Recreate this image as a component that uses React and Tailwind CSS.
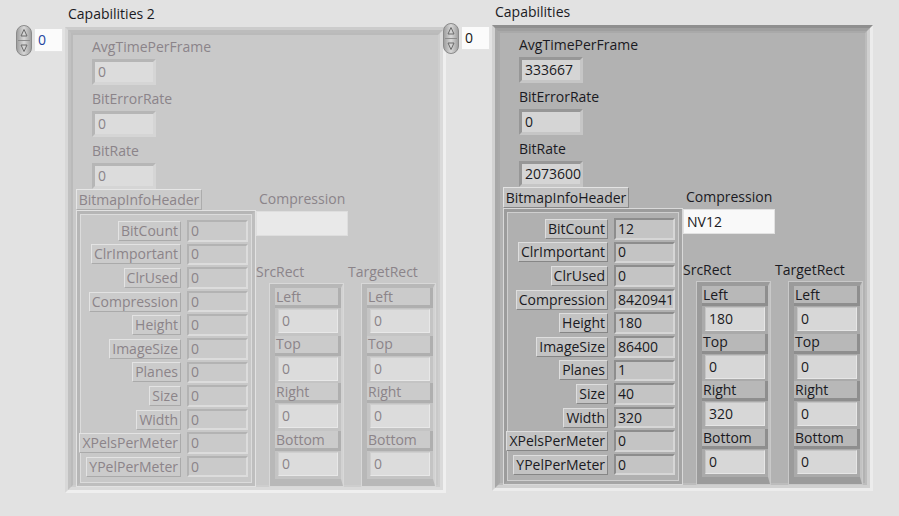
import React from "react";

const THEMES = {
  dark: {
    text: "text-[#1a1a22]",
    l1: "border-[3px] border-t-[#8f8f8f] border-l-[#d2d2d2] border-r-[#ececec] border-b-[#ececec]",
    l2: "border-[3px] border-t-[#9f9f9f] border-l-[#a7a7a7] border-r-[#d0d0d0] border-b-[#d0d0d0]",
    l3: "border-[2px] border-t-[#a9a9a9] border-l-[#a9a9a9] border-r-[#bcbcbc] border-b-[#bcbcbc] bg-[#b2b2b2]",
    topBox: "border-[3px] border-t-[#979797] border-l-[#979797] border-r-[#c6c6c6] border-b-[#c6c6c6] bg-[#d5d5d5]",
    headLabel: "border border-t-[#e3e3e3] border-l-[#e3e3e3] border-r-[#888888] border-b-[#888888] bg-[#c1c1c1]",
    cfOuter: "border border-[#d9d9d9]",
    cfMid: "border-[3px] border-t-[#9c9c9c] border-l-[#9c9c9c] border-r-[#a5a5a5] border-b-[#a5a5a5]",
    cfInner: "border border-[#cfcfcf] bg-[#b0b0b0]",
    rowLabel: "border border-t-[#dedede] border-l-[#dedede] border-r-[#868686] border-b-[#868686] bg-[#c3c3c3]",
    rowNum: "border-[2px] border-t-[#8d8d8d] border-l-[#8d8d8d] border-r-[#d6d6d6] border-b-[#d6d6d6] bg-[#c4c4c4]",
    strBox: "border border-[#e2e2e2] bg-[#f9f9f9]",
    rfOuter: "border border-[#c9c9c9]",
    rfInner: "border-t-[4px] border-l-[5px] border-r-[2px] border-b-[7px] border-t-[#9b9b9b] border-l-[#9b9b9b] border-r-[#c2c2c2] border-b-[#9b9b9b] bg-[#aaaaaa]",
    rBar: "border-b-[3px] border-r-[3px] border-b-[#8e8e8e] border-r-[#8e8e8e] bg-[#b8b8b8]",
    rBox: "border border-t-[#c4c4c4] border-l-[#c4c4c4] border-r-[#e6e6e6] border-b-[#e6e6e6] bg-[#d7d7d7]",
    idxText: "text-[#151515]",
  },
  dim: {
    text: "text-[#8b8489]",
    l1: "border-[3px] border-t-[#cccccc] border-l-[#d8d8d8] border-r-[#efefef] border-b-[#efefef]",
    l2: "border-[3px] border-t-[#bcbcbc] border-l-[#c1c1c1] border-r-[#dadada] border-b-[#dadada]",
    l3: "border-[2px] border-t-[#bababa] border-l-[#bababa] border-r-[#cecece] border-b-[#cecece] bg-[#c9c9c9]",
    topBox: "border-[3px] border-t-[#b6b6b6] border-l-[#b6b6b6] border-r-[#d5d5d5] border-b-[#d5d5d5] bg-[#dcdcdc]",
    headLabel: "border border-t-[#e6e6e6] border-l-[#e6e6e6] border-r-[#acacac] border-b-[#acacac] bg-[#cbcbcb]",
    cfOuter: "border border-[#e2e2e2]",
    cfMid: "border-[3px] border-t-[#b6b6b6] border-l-[#b6b6b6] border-r-[#bebebe] border-b-[#bebebe]",
    cfInner: "border border-[#dcdcdc] bg-[#c8c8c8]",
    rowLabel: "border border-t-[#e3e3e3] border-l-[#e3e3e3] border-r-[#aaaaaa] border-b-[#aaaaaa] bg-[#cbcbcb]",
    rowNum: "border-[2px] border-t-[#b3b3b3] border-l-[#b3b3b3] border-r-[#dcdcdc] border-b-[#dcdcdc] bg-[#cacaca]",
    strBox: "border border-[#dedede] bg-[#e9e9e9]",
    rfOuter: "border border-[#d8d8d8]",
    rfInner: "border-t-[4px] border-l-[5px] border-r-[2px] border-b-[7px] border-t-[#b8b8b8] border-l-[#b8b8b8] border-r-[#d2d2d2] border-b-[#b8b8b8] bg-[#c4c4c4]",
    rBar: "border-b-[3px] border-r-[3px] border-b-[#afafaf] border-r-[#afafaf] bg-[#cbcbcb]",
    rBox: "border border-t-[#cfcfcf] border-l-[#cfcfcf] border-r-[#e8e8e8] border-b-[#e8e8e8] bg-[#dcdcdc]",
    idxText: "text-[#1f45a0]",
  },
};

function Spinner() {
  return (
    <svg width="16" height="31" viewBox="0 0 16 31">
      <defs>
        <linearGradient id="spg" x1="0" x2="1" y1="0" y2="0">
          <stop offset="0" stopColor="#9c9c9c" />
          <stop offset="0.5" stopColor="#d8d8d8" />
          <stop offset="1" stopColor="#9c9c9c" />
        </linearGradient>
      </defs>
      <rect x="0.5" y="0.5" width="15" height="30" rx="7.5" fill="url(#spg)" stroke="#8a8a8a" />
      <line x1="2" y1="15.5" x2="14" y2="15.5" stroke="#8c8c8c" />
      <path d="M8 4.5 L11 11 L5 11 Z" fill="none" stroke="#6a6a6a" />
      <path d="M8 26.5 L11 20 L5 20 Z" fill="none" stroke="#6a6a6a" />
    </svg>
  );
}

function TopField({ t, label, value }) {
  return (
    <div className="flex flex-col">
      <div className={`h-[16px] pl-[17px] whitespace-nowrap ${t.text}`}>{label}</div>
      <div className={`mt-[4px] ml-[17px] w-[64px] h-[26px] pl-[3px] flex items-center ${t.topBox} ${t.text}`}>
        {value}
      </div>
    </div>
  );
}

function Row({ t, label, value }) {
  return (
    <div className="h-[23.6px] flex items-center">
      <div className="w-[100px] flex justify-end">
        <div className={`h-[20px] px-[2px] flex items-center whitespace-nowrap ${t.rowLabel} ${t.text}`}>{label}</div>
      </div>
      <div className={`ml-[6px] w-[61px] h-[21.5px] pl-[2px] flex items-center overflow-hidden whitespace-nowrap ${t.rowNum} ${t.text}`}>
        {value}
      </div>
    </div>
  );
}

function RectFrame({ t, values }) {
  const names = ["Left", "Top", "Right", "Bottom"];
  return (
    <div className={`w-[75px] h-[204px] ${t.rfOuter}`}>
      <div className={`h-full ${t.rfInner}`}>
        {names.map((n, i) => (
          <div key={n} className="h-[47.7px] flex flex-col">
            <div className={`h-[20px] pl-[1px] flex items-center ${t.rBar} ${t.text}`}>{n}</div>
            <div className={`mt-[1px] ml-[3px] w-[60px] h-[24px] pl-[3px] flex items-center ${t.rBox} ${t.text}`}>
              {values[i]}
            </div>
          </div>
        ))}
      </div>
    </div>
  );
}

function ArrayShell({ v, label, className, data }) {
  const t = THEMES[v];
  const rows = [
    ["BitCount", data.rows[0]],
    ["ClrImportant", data.rows[1]],
    ["ClrUsed", data.rows[2]],
    ["Compression", data.rows[3]],
    ["Height", data.rows[4]],
    ["ImageSize", data.rows[5]],
    ["Planes", data.rows[6]],
    ["Size", data.rows[7]],
    ["Width", data.rows[8]],
    ["XPelsPerMeter", data.rows[9]],
    ["YPelPerMeter", data.rows[10]],
  ];
  return (
    <div className={`flex flex-col shrink-0 ${className}`}>
      <div className="h-[21px] pl-[52px] pt-[0px] text-[#1a1a22] whitespace-nowrap">{label}</div>
      <div className="flex">
        <div className="w-[49px] flex items-start mt-[-2px]">
          <Spinner />
          <div className={`mt-[4px] ml-[3px] w-[28px] h-[23px] pl-[3px] flex items-center bg-[#fbfbfb] border-r border-b border-[#e4e4e4] ${t.idxText}`}>
            0
          </div>
        </div>
        <div className={`w-[381px] h-[466px] ${t.l1}`}>
          <div className={`h-full ${t.l2}`}>
            <div className={`h-full p-[2px] ${t.l3}`}>
              <div className="flex flex-col pt-[2px]">
                <TopField t={t} label="AvgTimePerFrame" value={data.avg} />
                <div className="mt-[6px]">
                  <TopField t={t} label="BitErrorRate" value={data.ber} />
                </div>
                <div className="mt-[6px]">
                  <TopField t={t} label="BitRate" value={data.rate} />
                </div>
                <div className="flex">
                  <div className="ml-[1px] w-[180px] flex flex-col">
                    <div className={`w-[126px] h-[21px] flex items-center justify-center whitespace-nowrap ${t.headLabel} ${t.text}`}>
                      BitmapInfoHeader
                    </div>
                    <div className={`w-[180px] h-[277px] ${t.cfOuter}`}>
                      <div className={`h-full ${t.cfMid}`}>
                        <div className={`h-full pt-[4px] ${t.cfInner}`}>
                          {rows.map(([n, val]) => (
                            <Row key={n} t={t} label={n} value={val} />
                          ))}
                        </div>
                      </div>
                    </div>
                  </div>
                  <div className="w-[180px] flex flex-col">
                    <div className={`h-[16px] mt-[2px] pl-[3px] ${t.text}`}>Compression</div>
                    <div className={`mt-[4px] w-[92px] h-[25px] pl-[3px] flex items-center ${t.strBox} ${t.text}`}>
                      {data.str}
                    </div>
                    <div className={`mt-[28px] h-[16px] flex ${t.text}`}>
                      <div className="w-[92px]">SrcRect</div>
                      <div>TargetRect</div>
                    </div>
                    <div className="mt-[3px] flex">
                      <div className="ml-[13px]">
                        <RectFrame t={t} values={data.src} />
                      </div>
                      <div className="ml-[17px]">
                        <RectFrame t={t} values={data.tgt} />
                      </div>
                    </div>
                  </div>
                </div>
              </div>
            </div>
          </div>
        </div>
      </div>
    </div>
  );
}

export default function App() {
  const left = {
    avg: "0",
    ber: "0",
    rate: "0",
    rows: ["0", "0", "0", "0", "0", "0", "0", "0", "0", "0", "0"],
    str: "",
    src: ["0", "0", "0", "0"],
    tgt: ["0", "0", "0", "0"],
  };
  const right = {
    avg: "333667",
    ber: "0",
    rate: "2073600",
    rows: ["12", "0", "0", "842094158", "180", "86400", "1", "40", "320", "0", "0"],
    str: "NV12",
    src: ["180", "0", "320", "0"],
    tgt: ["0", "0", "0", "0"],
  };
  return (
    <div className="w-[899px] h-[516px] bg-[#e2e2e2] flex items-start overflow-hidden font-['Open_Sans',sans-serif] text-[14px] leading-[16px]">
      <ArrayShell v="dim" label="Capabilities 2" className="ml-[16px] mt-[6px]" data={left} />
      <ArrayShell v="dark" label="Capabilities" className="ml-[-3px] mt-[4px]" data={right} />
    </div>
  );
}
